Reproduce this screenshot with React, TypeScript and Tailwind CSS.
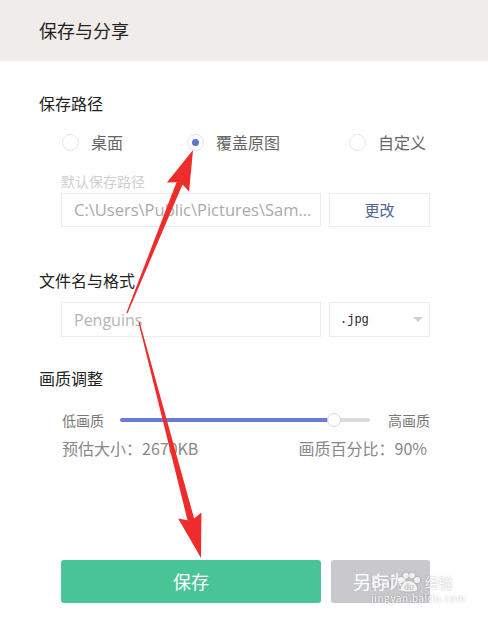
import React from 'react'

type Pt = [number, number]

// tapered red annotation arrow, tail -> tip
function arrowPoints(tail: Pt, tip: Pt, headLen: number, headW: number, shaftW: number) {
  const dx = tip[0] - tail[0]
  const dy = tip[1] - tail[1]
  const len = Math.hypot(dx, dy)
  const ux = dx / len
  const uy = dy / len
  const nx = -uy
  const ny = ux
  const bx = tip[0] - ux * headLen
  const by = tip[1] - uy * headLen
  const p = (x: number, y: number) => `${x.toFixed(1)},${y.toFixed(1)}`
  return [
    p(tail[0] + nx * 0.6, tail[1] + ny * 0.6),
    p(bx + nx * shaftW, by + ny * shaftW),
    p(bx + nx * headW + ux * -4, by + ny * headW + uy * -4),
    p(tip[0], tip[1]),
    p(bx - nx * headW + ux * -4, by - ny * headW + uy * -4),
    p(bx - nx * shaftW, by - ny * shaftW),
    p(tail[0] - nx * 0.6, tail[1] - ny * 0.6),
  ].join(' ')
}

function Radio({ label, checked, width }: { label: string; checked?: boolean; width: string }) {
  return (
    <div className={`flex items-center gap-[12px] ${width}`}>
      <span className="w-[17px] h-[17px] rounded-full border border-[#e3e3e3] flex items-center justify-center">
        {checked && <span className="w-[7px] h-[7px] rounded-full bg-[#5b73d3]" />}
      </span>
      <span className="text-[16px] text-[#666]">{label}</span>
    </div>
  )
}

export default function App() {
  return (
    <div
      className="relative w-[488px] h-[619px] bg-white overflow-hidden"
      style={{ fontFamily: '"Noto Sans CJK SC", "Liberation Sans", sans-serif' }}
    >
      {/* Header */}
      <div className="h-[61px] bg-[#f0ecea] flex items-center pl-[39px]">
        <span className="text-[18px] text-[#222]">保存与分享</span>
      </div>

      {/* Save path */}
      <div className="pl-[39px] pt-[30px]">
        <div className="text-[16px] text-[#222] leading-[24px]">保存路径</div>
      </div>
      <div className="pl-[62px] mt-[15px] flex items-center h-[24px]">
        <Radio label="桌面" width="w-[125px]" />
        <Radio label="覆盖原图" checked width="w-[162px]" />
        <Radio label="自定义" width="w-auto" />
      </div>
      <div className="pl-[61px] mt-[18px] text-[14px] leading-[18px] text-[#cfcfcf]">默认保存路径</div>
      <div className="pl-[61px] mt-[3px] flex gap-[8px]">
        <div className="w-[260px] h-[34px] border border-[#ececec] flex items-center pl-[12px] text-[16.5px] text-[#aaa] whitespace-nowrap overflow-hidden"
          style={{ fontFamily: '"Open Sans", "Liberation Sans", sans-serif' }}>
          C:\Users\Public\Pictures\Sam...
        </div>
        <div className="w-[101px] h-[34px] border border-[#ececec] flex items-center justify-center text-[15px] text-[#51639a]">
          更改
        </div>
      </div>

      {/* File name */}
      <div className="pl-[39px] mt-[41px] text-[16px] leading-[24px] text-[#222]">文件名与格式</div>
      <div className="pl-[61px] mt-[10px] flex gap-[8px]">
        <div className="w-[260px] h-[35px] border border-[#ececec] flex items-center pl-[12px] text-[16px] text-[#b5b5b5]"
          style={{ fontFamily: '"Open Sans", "Liberation Sans", sans-serif' }}>
          Penguins
        </div>
        <div className="w-[101px] h-[35px] border border-[#ececec] flex items-center justify-between pl-[10px] pr-[6px]">
          <span className="text-[12px] text-[#222]" style={{ fontFamily: '"Liberation Mono", monospace' }}>.jpg</span>
          <span className="w-0 h-0 border-l-[5px] border-r-[5px] border-t-[5px] border-l-transparent border-r-transparent border-t-[#cfcfcf]" />
        </div>
      </div>

      {/* Quality */}
      <div className="pl-[39px] mt-[29px] text-[16px] leading-[24px] text-[#222]">画质调整</div>
      <div className="pl-[62px] pr-[58px] mt-[20px] flex items-center h-[20px]">
        <span className="text-[14px] text-[#777] w-[58px]">低画质</span>
        <div className="relative w-[250px] h-[4px] rounded-full bg-[#d9d9de]">
          <div className="absolute left-0 top-0 h-[4px] w-[213px] rounded-full bg-[#6a7dd6]" />
          <div className="absolute left-[207px] top-[-5px] w-[14px] h-[14px] rounded-full bg-white border border-[#d4d4d4]" />
        </div>
        <span className="text-[14px] text-[#777] ml-auto">高画质</span>
      </div>
      <div className="pl-[62px] pr-[61px] mt-[6px] flex justify-between text-[16px] text-[#888]">
        <span>预估大小：2670KB</span>
        <span>画质百分比：90%</span>
      </div>

      {/* Buttons */}
      <div className="pl-[61px] mt-[100px] flex gap-[10px]">
        <button className="w-[260px] h-[43px] rounded-[3px] bg-[#48c497] text-white text-[18px]">保存</button>
        <button className="w-[99px] h-[43px] rounded-[3px] bg-[#c9c9cd] text-white text-[18px] text-left pl-[22px]">另存为</button>
      </div>

      {/* Watermark */}
      <div className="absolute left-[371px] top-[572px] flex flex-col items-start text-white/85 pointer-events-none whitespace-nowrap drop-shadow-[0_0_1px_rgba(0,0,0,0.3)]">
        <div className="flex items-center text-[15px] font-bold leading-[20px]">
          <span>Bai</span>
          <svg width="28" height="20" viewBox="0 0 28 20">
            <circle cx="6" cy="8" r="3" fill="white" fillOpacity="0.85" />
            <circle cx="11" cy="3.5" r="2.8" fill="white" fillOpacity="0.85" />
            <circle cx="17" cy="3.5" r="2.8" fill="white" fillOpacity="0.85" />
            <circle cx="22" cy="8" r="3" fill="white" fillOpacity="0.85" />
            <path d="M14 9 C9 9 5 14 6 18 C8 20 20 20 22 18 C23 14 19 9 14 9 Z" fill="white" fillOpacity="0.85" />
            <text x="14" y="18" textAnchor="middle" fontSize="8" fontWeight="bold" fill="#c9c9cd">du</text>
          </svg>
          <span className="ml-[2px] text-[14px] font-normal">经验</span>
        </div>
        <span className="text-[10px] leading-[12px] tracking-[0.5px] text-white/80">jingyan.baidu.com</span>
      </div>

      {/* Red annotation arrows */}
      <svg className="absolute inset-0 pointer-events-none" width="488" height="619">
        <polygon points={arrowPoints([127, 313], [193, 150], 36, 12, 3.2)} fill="#ee2c2c" />
        <polygon points={arrowPoints([139, 322], [201, 558], 40, 12, 3.4)} fill="#ee2c2c" />
      </svg>
    </div>
  )
}
